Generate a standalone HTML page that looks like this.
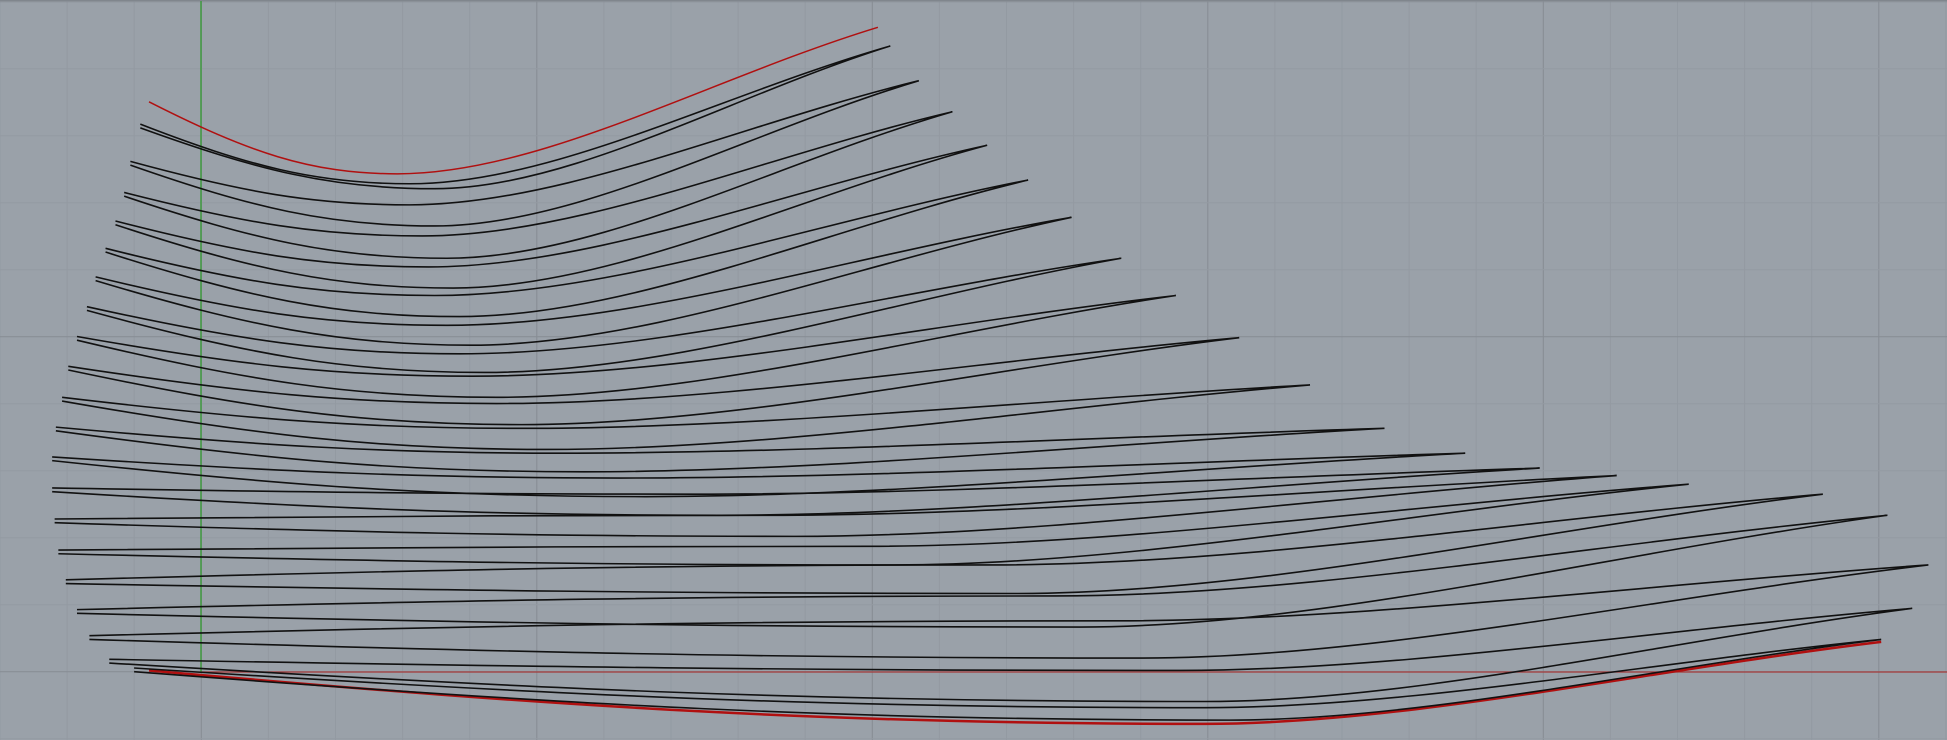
<!DOCTYPE html>
<html><head><meta charset="utf-8"><style>
html,body{margin:0;padding:0;background:#9aa1a9;width:1947px;height:740px;overflow:hidden}
svg{position:absolute;left:0;top:0}
</style></head><body>
<svg id="g" width="1947" height="740" viewBox="0 0 1947 740"></svg>
<svg id="c" width="1947" height="740" viewBox="0 0 1568 596" preserveAspectRatio="none"></svg>
<script>
var g=document.getElementById('g'),s='';
for(var x=0;x<1947;x+=67.1){var k=Math.round((x-201.3)/67.1);var maj=(((k%5)+5)%5)==0;
s+='<line x1="'+x.toFixed(1)+'" y1="0" x2="'+x.toFixed(1)+'" y2="740" stroke="'+(maj?'#868c93':'#939aa2')+'" stroke-width="1"/>';}
for(var i=0;i<12;i++){var y=1.7+67*i;var maj=(i%5)==0;
s+='<line x1="0" y1="'+y.toFixed(1)+'" x2="1947" y2="'+y.toFixed(1)+'" stroke="'+(maj?'#868c93':'#939aa2')+'" stroke-width="1"/>';}
s+='<line x1="201" y1="0" x2="201" y2="672" stroke="#3f9a3f" stroke-width="1.5"/>';
s+='<line x1="201" y1="672" x2="1947" y2="672" stroke="#a33a3a" stroke-width="1.2"/>';
s+='<line x1="0" y1="0.5" x2="1947" y2="0.5" stroke="#80868d" stroke-width="1"/>';
g.innerHTML=s;
var L=[
[113,100,717,37,330,148,152],[105,130,740,65,330,165,182],[100,155,767,90,340,190,208],
[93,178,795,117,345,215,232],[85,200,828,145,350,238,255],[77,223,863,175,360,262,278],
[70,247,903,208,370,285,300],[62,271,947,238,380,303,320],[55,295,998,272,400,325,342],
[50,320,1055,310,420,345,362],[45,344,1115,345,450,365,380],[42,368,1180,365,500,385,400],
[42,393,1240,377,560,398,415],[44,418,1302,383,620,415,432],[47,443,1360,390,700,440,455],
[53,467,1468,398,800,455,478],[62,491,1520,415,850,480,505],[72,512,1553,455,900,500,530],
[88,531,1540,490,950,540,565],[108,538,1515,515,970,570,580]];
function seg(lx,ly,mx,my,rx,ry){
return 'C'+(lx+(mx-lx)*0.4)+','+(ly+(my-ly)*0.7)+' '+(mx-(mx-lx)*0.35)+','+my+' '+mx+','+my+
' C'+(mx+(rx-mx)*0.3)+','+my+' '+(rx+(mx-rx)*0.35)+','+(ry+(my-ry)*0.35)+' '+rx+','+ry;}
function segr(rx,ry,mx,my,lx,ly){
return 'C'+(rx+(mx-rx)*0.35)+','+(ry+(my-ry)*0.35)+' '+(mx+(rx-mx)*0.3)+','+my+' '+mx+','+my+
' C'+(mx-(mx-lx)*0.35)+','+my+' '+(lx+(mx-lx)*0.4)+','+(ly+(my-ly)*0.7)+' '+lx+','+ly;}
var c='';
c+='<path d="M120,82 '+seg(120,82,320,140,707,22)+'" fill="none" stroke="#b01010" stroke-width="1.5" vector-effect="non-scaling-stroke"/>';
c+='<path d="M120,540 '+seg(120,540,970,583,1515,517)+'" fill="none" stroke="#b01010" stroke-width="2.5" vector-effect="non-scaling-stroke"/>';
L.forEach(function(a){
c+='<path d="M'+a[0]+','+a[1]+' '+seg(a[0],a[1],a[4],a[5],a[2],a[3])+' '+segr(a[2],a[3],a[4]+20,a[6],a[0],a[1]+3)+'" fill="none" stroke="#111" stroke-width="1.6" vector-effect="non-scaling-stroke"/>';});
document.getElementById('c').innerHTML=c;
</script>
</body></html>
